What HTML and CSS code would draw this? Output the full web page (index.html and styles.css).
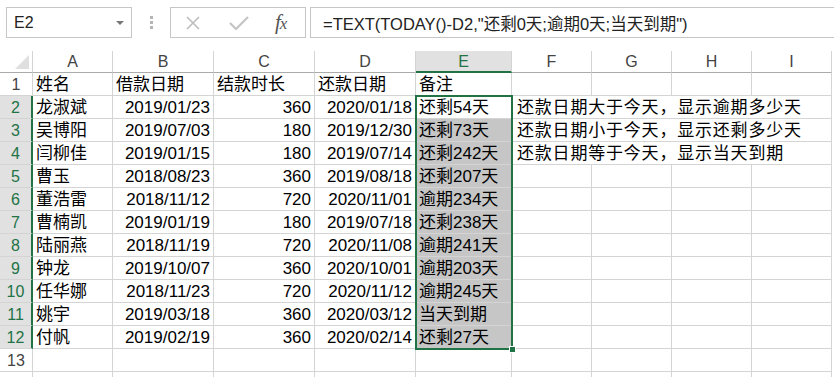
FILE: index.html
```html
<!DOCTYPE html>
<html lang="zh-CN">
<head>
  <meta charset="UTF-8">
  <title>TEXT 函数 - 还款备注</title>
  <link rel="stylesheet" href="styles.css">
</head>
<body>

  <!-- 编辑栏 -->
  <div class="bar">
    <div class="namebox">
      <span>E2</span>
      <span class="arrow"></span>
    </div>
    <div class="grip"><i></i><i></i><i></i></div>
    <div class="buttons">
      <svg class="ico" width="16" height="14" viewBox="0 0 16 14">
        <path d="M2 1 L14 13 M14 1 L2 13" stroke="#bdbdbd" stroke-width="1.6" fill="none"/>
      </svg>
      <svg class="ico" width="20" height="14" viewBox="0 0 20 14">
        <path d="M1 7 L7 13 L19 1" stroke="#c4c4c4" stroke-width="2.2" fill="none"/>
      </svg>
      <span class="fx">f<i>x</i></span>
    </div>
    <div class="formula">=TEXT(TODAY()-D2,"还剩0天;逾期0天;当天到期")</div>
  </div>

  <!-- 表格 -->
  <div class="sheet">
    <div class="c h corner"></div>
    <div class="c h">A</div>
    <div class="c h">B</div>
    <div class="c h">C</div>
    <div class="c h">D</div>
    <div class="c h on">E</div>
    <div class="c h">F</div>
    <div class="c h">G</div>
    <div class="c h">H</div>
    <div class="c h">I</div>

    <div class="c r">1</div>
    <div class="c">姓名</div><div class="c">借款日期</div><div class="c">结款时长</div><div class="c">还款日期</div><div class="c">备注</div>
    <div class="c"></div><div class="c"></div><div class="c"></div><div class="c"></div>

    <div class="c r sel">2</div>
    <div class="c">龙淑斌</div><div class="c n">2019/01/23</div><div class="c n">360</div><div class="c n">2020/01/18</div><div class="c">还剩54天</div>
    <div class="c note">还款日期大于今天，显示逾期多少天</div>

    <div class="c r sel">3</div>
    <div class="c">吴博阳</div><div class="c n">2019/07/03</div><div class="c n">180</div><div class="c n">2019/12/30</div><div class="c hl">还剩73天</div>
    <div class="c note">还款日期小于今天，显示还剩多少天</div>

    <div class="c r sel">4</div>
    <div class="c">闫柳佳</div><div class="c n">2019/01/15</div><div class="c n">180</div><div class="c n">2019/07/14</div><div class="c hl">还剩242天</div>
    <div class="c note">还款日期等于今天，显示当天到期</div>

    <div class="c r sel">5</div>
    <div class="c">曹玉</div><div class="c n">2018/08/23</div><div class="c n">360</div><div class="c n">2019/08/18</div><div class="c hl">还剩207天</div>
    <div class="c"></div><div class="c"></div><div class="c"></div><div class="c"></div>

    <div class="c r sel">6</div>
    <div class="c">董浩雷</div><div class="c n">2018/11/12</div><div class="c n">720</div><div class="c n">2020/11/01</div><div class="c hl">逾期234天</div>
    <div class="c"></div><div class="c"></div><div class="c"></div><div class="c"></div>

    <div class="c r sel">7</div>
    <div class="c">曹楠凯</div><div class="c n">2019/01/19</div><div class="c n">180</div><div class="c n">2019/07/18</div><div class="c hl">还剩238天</div>
    <div class="c"></div><div class="c"></div><div class="c"></div><div class="c"></div>

    <div class="c r sel">8</div>
    <div class="c">陆丽燕</div><div class="c n">2018/11/19</div><div class="c n">720</div><div class="c n">2020/11/08</div><div class="c hl">逾期241天</div>
    <div class="c"></div><div class="c"></div><div class="c"></div><div class="c"></div>

    <div class="c r sel">9</div>
    <div class="c">钟龙</div><div class="c n">2019/10/07</div><div class="c n">360</div><div class="c n">2020/10/01</div><div class="c hl">逾期203天</div>
    <div class="c"></div><div class="c"></div><div class="c"></div><div class="c"></div>

    <div class="c r sel">10</div>
    <div class="c">任华娜</div><div class="c n">2018/11/23</div><div class="c n">720</div><div class="c n">2020/11/12</div><div class="c hl">逾期245天</div>
    <div class="c"></div><div class="c"></div><div class="c"></div><div class="c"></div>

    <div class="c r sel">11</div>
    <div class="c">姚宇</div><div class="c n">2019/03/18</div><div class="c n">360</div><div class="c n">2020/03/12</div><div class="c hl">当天到期</div>
    <div class="c"></div><div class="c"></div><div class="c"></div><div class="c"></div>

    <div class="c r sel">12</div>
    <div class="c">付帆</div><div class="c n">2019/02/19</div><div class="c n">360</div><div class="c n">2020/02/14</div><div class="c hl">还剩27天</div>
    <div class="c"></div><div class="c"></div><div class="c"></div><div class="c"></div>

    <div class="c r">13</div>
    <div class="c"></div><div class="c"></div><div class="c"></div><div class="c"></div><div class="c"></div>
    <div class="c"></div><div class="c"></div><div class="c"></div><div class="c"></div>

    <div class="c r"></div>
    <div class="c"></div><div class="c"></div><div class="c"></div><div class="c"></div><div class="c"></div>
    <div class="c"></div><div class="c"></div><div class="c"></div><div class="c"></div>

    <!-- 选区 E2:E12 -->
    <div class="selection"><span class="handle"></span></div>
  </div>

</body>
</html>
```

FILE: styles.css
```css
html, body {
  margin: 0;
  padding: 0;
  height: 100%;
  overflow: hidden;
  background: #fff;
  font-family: 'Liberation Sans', 'Noto Sans CJK SC', sans-serif;
  color: #000;
}

/* 编辑栏 */
.bar {
  display: flex;
  align-items: stretch;
  height: 31px;
  padding-top: 7px;
  margin-bottom: 13px;
}

.namebox {
  box-sizing: border-box;
  width: 126px;
  margin-left: 6px;
  border: 1px solid #c6c6c6;
  display: flex;
  align-items: center;
  justify-content: space-between;
  padding: 0 7px 0 7px;
  font-size: 16px;
  color: #222;
}

.arrow {
  width: 0;
  height: 0;
  border-left: 4px solid transparent;
  border-right: 4px solid transparent;
  border-top: 4px solid #777;
}

.grip {
  width: 38px;
  display: flex;
  flex-direction: column;
  align-items: center;
  justify-content: center;
  gap: 2px;
}

.grip i {
  display: block;
  width: 3px;
  height: 3px;
  background: #b5b5b5;
}

.buttons {
  box-sizing: border-box;
  width: 136px;
  border: 1px solid #c6c6c6;
  display: flex;
  align-items: center;
  padding-left: 14px;
  gap: 28px;
}

.fx {
  font-family: 'Liberation Serif', serif;
  font-style: italic;
  font-size: 21px;
  color: #555;
  margin-left: -2px;
  letter-spacing: -1px;
}

.fx i {
  font-size: 17px;
}

.formula {
  flex: 1;
  margin-left: 4px;
  border: 1px solid #c6c6c6;
  border-right: none;
  display: flex;
  align-items: center;
  padding-left: 12px;
  font-size: 16.5px;
  color: #222;
  white-space: nowrap;
}

/* 表格 */
.sheet {
  position: relative;
  display: grid;
  grid-template-columns: 33px 80px 101px 101px 101px 96px 80px 80px 80px 80px;
  grid-template-rows: 22px;
  grid-auto-rows: 23px;
}

.c {
  box-sizing: border-box;
  border-right: 1px solid #d4d4d4;
  border-bottom: 1px solid #d4d4d4;
  font-size: 17px;
  line-height: 20px;
  padding: 2px 3px 0;
  white-space: nowrap;
  overflow: hidden;
}

.n {
  text-align: right;
}

.h {
  text-align: center;
  font-size: 16px;
  line-height: 21px;
  padding-top: 0;
  color: #444;
  border-bottom-color: #ababab;
}

.h.on {
  background: #e1e1e1;
  color: #217346;
  border-bottom: 2px solid #217346;
}

.corner {
  position: relative;
}

.corner::after {
  content: '';
  position: absolute;
  right: 3px;
  bottom: 3px;
  width: 0;
  height: 0;
  border-left: 14px solid transparent;
  border-bottom: 14px solid #dfdfdf;
}

.r {
  text-align: center;
  font-size: 16px;
  color: #444;
  padding-left: 0;
  padding-right: 0;
}

.r.sel {
  background: #e1e1e1;
  color: #217346;
  border-right: 2px solid #217346;
}

.hl {
  background: #c6c6c6;
}

.note {
  grid-column: span 4;
  padding-left: 5px;
  letter-spacing: 0.8px;
}

.selection {
  position: absolute;
  left: 415px;
  top: 44px;
  width: 98px;
  height: 255px;
  box-sizing: border-box;
  border: 2px solid #217346;
  pointer-events: none;
}

.handle {
  position: absolute;
  right: -5px;
  bottom: -5px;
  width: 5px;
  height: 5px;
  background: #217346;
  border: 1px solid #fff;
}
```
